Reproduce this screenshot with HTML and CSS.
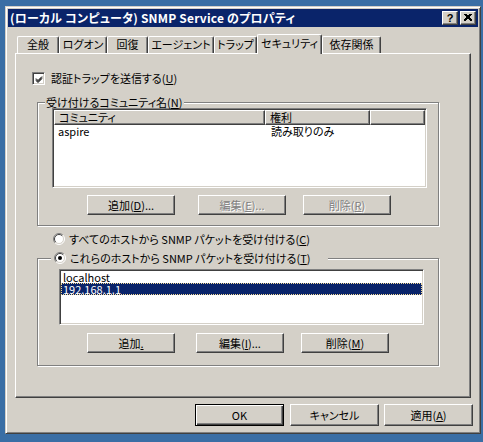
FILE: index.html
```html
<!DOCTYPE html>
<html lang="ja">
<head>
<meta charset="utf-8">
<title>SNMP Service のプロパティ</title>
<link rel="stylesheet" href="styles.css">
</head>
<body>
<div class="window">
  <div class="titlebar">
    <span class="title">(ローカル コンピュータ) SNMP Service のプロパティ</span>
    <div class="tbtns">
      <span class="tbtn help">?</span>
      <span class="tbtn close"><svg width="8" height="7" viewBox="0 0 8 7"><path d="M0.5 0 L7.5 7 M1.5 0 L7.5 6 M7.5 0 L0.5 7 M6.5 0 L0.5 6" stroke="#000" stroke-width="1" fill="none" shape-rendering="crispEdges"/></svg></span>
    </div>
  </div>
  <div class="body">
    <div class="tabs">
      <div class="tab t1">全般</div>
      <div class="tab t2">ログオン</div>
      <div class="tab t3">回復</div>
      <div class="tab t4">エージェント</div>
      <div class="tab t5">トラップ</div>
      <div class="tab t6 active">セキュリティ</div>
      <div class="tab t7">依存関係</div>
    </div>
    <div class="panel">
      <div class="checkrow">
        <span class="check"><svg width="9" height="9" viewBox="0 0 9 9"><path d="M1 3.5 L3 5.5 L7 1.5 M1 4.5 L3 6.5 L7 2.5 M1 5.5 L3 7.5 L7 3.5" stroke="#000" fill="none"/></svg></span>
        <span class="lbl">認証トラップを送信する(<u>U</u>)</span>
      </div>
      <div class="group g1">
        <span class="legend">受け付けるコミュニティ名(<u>N</u>)</span>
        <div class="list l1">
          <div class="lhead">
            <div class="hc c1">コミュニティ</div>
            <div class="hc c2">権利</div>
            <div class="hc c3"></div>
          </div>
          <div class="lrow">
            <div class="cell c1">aspire</div>
            <div class="cell c2">読み取りのみ</div>
          </div>
        </div>
        <div class="btnrow br1">
          <span class="btn b-add1">追加(<u>D</u>)...</span>
          <span class="btn disabled b-edit1">編集(<u>E</u>)...</span>
          <span class="btn disabled b-del1">削除(<u>R</u>)</span>
        </div>
      </div>
      <div class="radiorow r1">
        <svg class="radio" width="12" height="12" viewBox="0 0 12 12"><circle cx="6" cy="6" r="5" fill="#fff"/><path d="M2.1 9.9 A5.5 5.5 0 0 1 9.9 2.1" stroke="#808080" fill="none"/><path d="M2.8 9.2 A4.5 4.5 0 0 1 9.2 2.8" stroke="#404040" fill="none"/><path d="M9.9 2.1 A5.5 5.5 0 0 1 2.1 9.9" stroke="#fff" fill="none"/><path d="M9.2 2.8 A4.5 4.5 0 0 1 2.8 9.2" stroke="#D4D0C8" fill="none"/></svg>
        <span class="lbl">すべてのホストから SNMP パケットを受け付ける(<u>C</u>)</span>
      </div>
      <div class="group g2">
        <div class="legend radiolegend">
          <svg class="radio" width="12" height="12" viewBox="0 0 12 12"><circle cx="6" cy="6" r="5" fill="#fff"/><path d="M2.1 9.9 A5.5 5.5 0 0 1 9.9 2.1" stroke="#808080" fill="none"/><path d="M2.8 9.2 A4.5 4.5 0 0 1 9.2 2.8" stroke="#404040" fill="none"/><path d="M9.9 2.1 A5.5 5.5 0 0 1 2.1 9.9" stroke="#fff" fill="none"/><path d="M9.2 2.8 A4.5 4.5 0 0 1 2.8 9.2" stroke="#D4D0C8" fill="none"/><circle cx="6" cy="6" r="2" fill="#000"/></svg>
          <span class="lbl">これらのホストから SNMP パケットを受け付ける(<u>T</u>)</span>
        </div>
        <div class="list l2">
          <div class="item">localhost</div>
          <div class="item sel">192.168.1.1</div>
        </div>
        <div class="btnrow br2">
          <span class="btn b-add2">追加<u>.</u></span>
          <span class="btn b-edit2">編集(<u>I</u>)...</span>
          <span class="btn b-del2">削除(<u>M</u>)</span>
        </div>
      </div>
    </div>
    <div class="footer">
      <span class="btn big default">OK</span>
      <span class="btn big b-cancel">キャンセル</span>
      <span class="btn big b-apply">適用(<u>A</u>)</span>
    </div>
  </div>
</div>
</body>
</html>
```
FILE: styles.css
```css
body {
  margin: 0;
  background: #3A6EA5;
  font-family: "Noto Sans CJK JP", "Liberation Sans", sans-serif;
  font-size: 11px;
  font-feature-settings: "palt";
  color: #000;
}
u { text-decoration: underline; text-underline-offset: 1px; }

.window {
  margin: 6px 0 0 5px;
  width: 476px;
  height: 428px;
  box-sizing: border-box;
  background: #D4D0C8;
  border: 1px solid;
  border-color: #D4D0C8 #404040 #404040 #D4D0C8;
  box-shadow: inset 1px 1px #fff, inset -1px -1px #808080;
  padding: 2px;
}

.titlebar {
  height: 18px;
  background: #0A246A;
  display: flex;
  align-items: center;
  justify-content: space-between;
  padding: 0 2px 0 2px;
  color: #fff;
  font-size: 12px;
  font-weight: bold;
  line-height: 18px;
}
.title { letter-spacing: 0.2px; }
.tbtns { display: flex; gap: 2px; }
.tbtn {
  width: 16px;
  height: 14px;
  box-sizing: border-box;
  background: #D4D0C8;
  border: 1px solid;
  border-color: #fff #404040 #404040 #fff;
  box-shadow: inset -1px -1px #808080;
  display: flex;
  align-items: center;
  justify-content: center;
  color: #000;
  font-family: "Liberation Sans", sans-serif;
  font-size: 11px;
  font-weight: bold;
  line-height: 12px;
}
.tbtn svg { display: block; margin: 0 1px 1px 0; }

.body { padding: 7px 0 0 7px; }

.tabs {
  display: flex;
  align-items: flex-end;
  height: 19px;
  margin-left: 2px;
  position: relative;
  z-index: 1;
}
.tab {
  height: 17px;
  box-sizing: border-box;
  border-top: 1px solid #fff;
  border-left: 1px solid #fff;
  border-right: 1px solid #404040;
  box-shadow: inset -1px 0 #808080;
  border-radius: 2px 2px 0 0;
  text-align: center;
  line-height: 15px;
  background: #D4D0C8;
  white-space: nowrap;
}
.tab.active {
  height: 20px;
  margin-bottom: -1px;
  line-height: 16px;
  padding-bottom: 2px;
}
.t1 { width: 42px; }
.t2 { width: 48px; }
.t3 { width: 41px; }
.t4 { width: 66px; }
.t5 { width: 43px; }
.t6 { width: 65px; }
.t7 { width: 59px; }

.panel {
  width: 456px;
  height: 345px;
  box-sizing: border-box;
  border: 1px solid;
  border-color: #fff #404040 #404040 #fff;
  box-shadow: inset -1px -1px #808080;
  padding: 18px 0 0 21px;
}

.checkrow {
  display: flex;
  align-items: center;
  height: 13px;
  margin-left: -5px;
  gap: 6px;
}
.check {
  width: 13px;
  height: 13px;
  box-sizing: border-box;
  background: #fff;
  border: 1px solid;
  border-color: #808080 #fff #fff #808080;
  box-shadow: inset 1px 1px #404040, inset -1px -1px #D4D0C8;
  display: flex;
  align-items: center;
  justify-content: center;
}
.check svg { display: block; margin: 1px 0 0 1px; }
.lbl { line-height: 13px; white-space: nowrap; }

.group {
  position: relative;
  width: 402px;
  box-sizing: border-box;
  border: 1px solid #808080;
  box-shadow: inset 1px 1px #fff, 1px 1px #fff;
}
.g1 { height: 124px; margin-top: 17px; }
.g2 { height: 108px; margin-top: 13px; }

.legend {
  position: absolute;
  top: -7px;
  left: 7px;
  background: #D4D0C8;
  padding: 0 1px;
  line-height: 12px;
  white-space: nowrap;
}
.radiolegend {
  top: -7px;
  left: 13px;
  padding: 0 17px 0 3px;
  display: flex;
  align-items: center;
  gap: 4px;
  height: 12px;
}
.radio { display: block; flex: none; }

.list {
  box-sizing: border-box;
  background: #fff;
  border: 1px solid;
  border-color: #808080 #fff #fff #808080;
  box-shadow: inset 1px 1px #404040, inset -1px -1px #D4D0C8;
  padding: 1px;
}
.l1 {
  width: 375px;
  height: 80px;
  margin: 5px 0 0 14px;
}
.lhead { display: flex; height: 15px; }
.hc {
  box-sizing: border-box;
  height: 15px;
  background: #D4D0C8;
  border: 1px solid;
  border-color: #fff #404040 #404040 #fff;
  box-shadow: inset -1px -1px #808080;
  padding-left: 4px;
  line-height: 12px;
}
.lhead .c1 { width: 211px; }
.lhead .c2 { width: 105px; }
.lhead .c3 { flex: 1; }
.lrow { display: flex; height: 13px; line-height: 13px; }
.lrow .c1 { width: 211px; padding-left: 4px; box-sizing: border-box; }
.lrow .c2 { padding-left: 6px; }

.btnrow { display: flex; }
.br1 { margin: 7px 0 0 49px; }
.br2 { margin: 8px 0 0 49px; }
.btn {
  width: 88px;
  height: 20px;
  box-sizing: border-box;
  background: #D4D0C8;
  border: 1px solid;
  border-color: #fff #404040 #404040 #fff;
  box-shadow: inset -1px -1px #808080;
  display: flex;
  align-items: center;
  justify-content: center;
  line-height: 14px;
  white-space: nowrap;
}
.btn.disabled { color: #808080; text-shadow: 1px 1px #fff; }
.b-edit1 { margin-left: 23px; }
.b-del1 { margin-left: 17px; }
.b-edit2 { margin-left: 21px; }
.b-del2 { margin-left: 17px; }

.radiorow {
  display: flex;
  align-items: center;
  gap: 4px;
  height: 12px;
  margin: 7px 0 0 16px;
}

.l2 {
  width: 365px;
  height: 56px;
  margin: 10px 0 0 21px;
}
.item {
  height: 12px;
  line-height: 12px;
  padding-left: 2px;
  box-sizing: border-box;
}
.item.sel {
  background: #0A246A;
  color: #fff;
  outline: 1px dotted #F5DB95;
  outline-offset: -1px;
}

.footer {
  display: flex;
  margin: 6px 0 0 180px;
}
.btn.big { width: 89px; height: 22px; }
.btn.default {
  border: 1px solid #000;
  box-shadow: inset 1px 1px #fff, inset -1px -1px #404040, inset -2px -2px #808080;
}
.b-cancel { margin-left: 6px; }
.b-apply { margin-left: 5px; }
```
